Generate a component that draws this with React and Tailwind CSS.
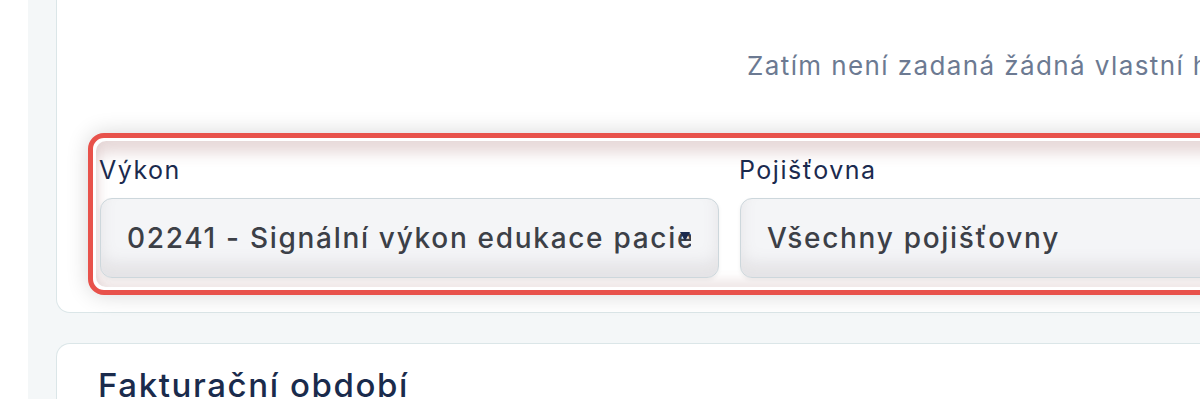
import React from 'react'

const font = { fontFamily: 'Inter, "Noto Sans", sans-serif' }

function SelectBox({ label, value, width, caret }) {
  return (
    <div className={`flex flex-col shrink-0 ${width}`}>
      <label className="text-[25px] leading-[30px] tracking-[1.5px] text-[#1b2a4e] mb-[13px] -ml-[1px]">{label}</label>
      <div className="relative h-[80px] rounded-[12px] border border-[#cdd7dc] bg-[#f4f5f7] shadow-[inset_0_-14px_16px_rgba(120,110,115,0.13),0_2px_4px_rgba(0,0,0,0.06)] flex items-center pl-[26px] pr-[27px] overflow-hidden">
        <span className="text-[28px] font-medium text-[#3c4047] whitespace-nowrap overflow-hidden tracking-[1.7px]">{value}</span>
        {caret && (
          <svg className="absolute right-[28px] top-[33px] z-10" width="10" height="9" viewBox="0 0 10 9">
            <path d="M0 0 L10 0 L5 9 Z" fill="#1b2a4e" />
          </svg>
        )}
      </div>
    </div>
  )
}

export default function App() {
  return (
    <div className="w-[1200px] h-[399px] overflow-hidden flex bg-white" style={font}>
      <div className="w-[28px] shrink-0 bg-white" />
      <div className="flex-1 bg-[#f4f7f8] pl-[28px] flex flex-col">
        {/* upper card, top is off screen */}
        <div className="bg-white border border-t-0 border-[#dbe6e8] rounded-b-[14px] w-[1300px] shrink-0 pt-[50px] pb-[17px]">
          <p className="pl-[690px] text-[26px] leading-[32px] tracking-[1.4px] text-[#6c7a92] whitespace-nowrap">
            Zatím není zadaná žádná vlastní hodnota
          </p>
          <div className="mt-[51px] ml-[31px] w-[1250px] border-[5px] border-[#e8524b] rounded-[16px] p-[3px] bg-white shadow-[0_0_22px_rgba(0,0,0,0.16)]">
            <div className="rounded-[10px] bg-white shadow-[inset_0_12px_14px_rgba(170,120,120,0.28),inset_0_-8px_10px_rgba(170,120,120,0.16)] pt-[14px] pb-[9px] pl-[4px] flex gap-[21px]">
              <SelectBox label="Výkon" value="02241 - Signální výkon edukace pacienta" width="w-[619px]" caret />
              <SelectBox label="Pojišťovna" value="Všechny pojišťovny" width="w-[619px]" />
            </div>
          </div>
        </div>
        {/* lower card */}
        <div className="mt-[30px] bg-white border border-b-0 border-[#dbe6e8] rounded-t-[14px] w-[1300px] shrink-0 pt-[20px] pl-[41px]">
          <h2 className="text-[33px] leading-[42px] font-medium tracking-[1.6px] text-[#1a2b4c]">Fakturační období</h2>
        </div>
      </div>
    </div>
  )
}
